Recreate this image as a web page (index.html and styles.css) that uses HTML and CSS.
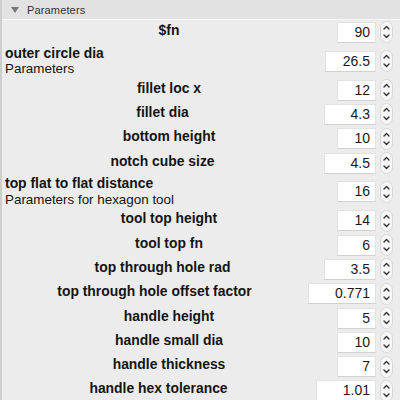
FILE: index.html
```html
<!DOCTYPE html>
<html>
<head>
<meta charset="utf-8">
<link rel="stylesheet" href="styles.css">
</head>
<body>
<div class="panel">
  <div class="header"><span class="tri"></span><span class="title">Parameters</span></div>
  <div class="rows">
    <div class="row"><div class="label">$fn</div><span class="num w39">90</span><svg class="spin" viewBox="0 0 13 22" width="13" height="22"><rect x="0.5" y="0.5" width="12" height="21" rx="6" class="cap"/><path d="M4 8 L6.5 5.5 L9 8" class="chev"/><path d="M4 14 L6.5 16.5 L9 14" class="chev"/></svg></div>
    <div class="row tall"><div class="label left"><span class="name">outer circle dia</span><span class="desc">Parameters</span></div><span class="num w51">26.5</span><svg class="spin" viewBox="0 0 13 22" width="13" height="22"><rect x="0.5" y="0.5" width="12" height="21" rx="6" class="cap"/><path d="M4 8 L6.5 5.5 L9 8" class="chev"/><path d="M4 14 L6.5 16.5 L9 14" class="chev"/></svg></div>
    <div class="row"><div class="label">fillet loc x</div><span class="num w39">12</span><svg class="spin" viewBox="0 0 13 22" width="13" height="22"><rect x="0.5" y="0.5" width="12" height="21" rx="6" class="cap"/><path d="M4 8 L6.5 5.5 L9 8" class="chev"/><path d="M4 14 L6.5 16.5 L9 14" class="chev"/></svg></div>
    <div class="row"><div class="label">fillet dia</div><span class="num w52">4.3</span><svg class="spin" viewBox="0 0 13 22" width="13" height="22"><rect x="0.5" y="0.5" width="12" height="21" rx="6" class="cap"/><path d="M4 8 L6.5 5.5 L9 8" class="chev"/><path d="M4 14 L6.5 16.5 L9 14" class="chev"/></svg></div>
    <div class="row"><div class="label">bottom height</div><span class="num w39">10</span><svg class="spin" viewBox="0 0 13 22" width="13" height="22"><rect x="0.5" y="0.5" width="12" height="21" rx="6" class="cap"/><path d="M4 8 L6.5 5.5 L9 8" class="chev"/><path d="M4 14 L6.5 16.5 L9 14" class="chev"/></svg></div>
    <div class="row"><div class="label">notch cube size</div><span class="num w52">4.5</span><svg class="spin" viewBox="0 0 13 22" width="13" height="22"><rect x="0.5" y="0.5" width="12" height="21" rx="6" class="cap"/><path d="M4 8 L6.5 5.5 L9 8" class="chev"/><path d="M4 14 L6.5 16.5 L9 14" class="chev"/></svg></div>
    <div class="row tall"><div class="label left"><span class="name">top flat to flat distance</span><span class="desc">Parameters for hexagon tool</span></div><span class="num w39">16</span><svg class="spin" viewBox="0 0 13 22" width="13" height="22"><rect x="0.5" y="0.5" width="12" height="21" rx="6" class="cap"/><path d="M4 8 L6.5 5.5 L9 8" class="chev"/><path d="M4 14 L6.5 16.5 L9 14" class="chev"/></svg></div>
    <div class="row"><div class="label">tool top height</div><span class="num w39">14</span><svg class="spin" viewBox="0 0 13 22" width="13" height="22"><rect x="0.5" y="0.5" width="12" height="21" rx="6" class="cap"/><path d="M4 8 L6.5 5.5 L9 8" class="chev"/><path d="M4 14 L6.5 16.5 L9 14" class="chev"/></svg></div>
    <div class="row"><div class="label">tool top fn</div><span class="num w39">6</span><svg class="spin" viewBox="0 0 13 22" width="13" height="22"><rect x="0.5" y="0.5" width="12" height="21" rx="6" class="cap"/><path d="M4 8 L6.5 5.5 L9 8" class="chev"/><path d="M4 14 L6.5 16.5 L9 14" class="chev"/></svg></div>
    <div class="row"><div class="label">top through hole rad</div><span class="num w52">3.5</span><svg class="spin" viewBox="0 0 13 22" width="13" height="22"><rect x="0.5" y="0.5" width="12" height="21" rx="6" class="cap"/><path d="M4 8 L6.5 5.5 L9 8" class="chev"/><path d="M4 14 L6.5 16.5 L9 14" class="chev"/></svg></div>
    <div class="row"><div class="label">top through hole offset factor</div><span class="num w68">0.771</span><svg class="spin" viewBox="0 0 13 22" width="13" height="22"><rect x="0.5" y="0.5" width="12" height="21" rx="6" class="cap"/><path d="M4 8 L6.5 5.5 L9 8" class="chev"/><path d="M4 14 L6.5 16.5 L9 14" class="chev"/></svg></div>
    <div class="row"><div class="label">handle height</div><span class="num w39">5</span><svg class="spin" viewBox="0 0 13 22" width="13" height="22"><rect x="0.5" y="0.5" width="12" height="21" rx="6" class="cap"/><path d="M4 8 L6.5 5.5 L9 8" class="chev"/><path d="M4 14 L6.5 16.5 L9 14" class="chev"/></svg></div>
    <div class="row"><div class="label">handle small dia</div><span class="num w39">10</span><svg class="spin" viewBox="0 0 13 22" width="13" height="22"><rect x="0.5" y="0.5" width="12" height="21" rx="6" class="cap"/><path d="M4 8 L6.5 5.5 L9 8" class="chev"/><path d="M4 14 L6.5 16.5 L9 14" class="chev"/></svg></div>
    <div class="row"><div class="label">handle thickness</div><span class="num w39">7</span><svg class="spin" viewBox="0 0 13 22" width="13" height="22"><rect x="0.5" y="0.5" width="12" height="21" rx="6" class="cap"/><path d="M4 8 L6.5 5.5 L9 8" class="chev"/><path d="M4 14 L6.5 16.5 L9 14" class="chev"/></svg></div>
    <div class="row"><div class="label">handle hex tolerance</div><span class="num w60">1.01</span><svg class="spin" viewBox="0 0 13 22" width="13" height="22"><rect x="0.5" y="0.5" width="12" height="21" rx="6" class="cap"/><path d="M4 8 L6.5 5.5 L9 8" class="chev"/><path d="M4 14 L6.5 16.5 L9 14" class="chev"/></svg></div>
  </div>
</div>
</body>
</html>
```
FILE: styles.css
```css
html, body {
  margin: 0;
  padding: 0;
  background: #ececec;
}
body {
  width: 400px;
  height: 400px;
  overflow: hidden;
  font-family: "Liberation Sans", Arial, sans-serif;
  color: #1c1c1c;
}
.panel {
  height: 400px;
  border-left: 2px solid #cdcdcd;
  box-sizing: border-box;
  background: #ececec;
}
.header {
  height: 19px;
  background: #e2e2e2;
  border-bottom: 1px solid #f7f7f7;
  display: flex;
  align-items: center;
  padding-left: 9px;
  box-sizing: content-box;
}
.tri {
  width: 0;
  height: 0;
  border-left: 4px solid transparent;
  border-right: 4px solid transparent;
  border-top: 6px solid #777;
  margin-top: 1px;
}
.title {
  margin-left: 8px;
  font-size: 11px;
  color: #333;
  letter-spacing: 0.15px;
}
.rows {
  padding-top: 0.25px;
}
.row {
  display: flex;
  align-items: center;
  height: 24.3px;
  padding-left: 3px;
  padding-right: 7px;
}
.row.tall {
  height: 33.5px;
}
.label {
  flex: 1;
  text-align: center;
  font-weight: bold;
  font-size: 13.9px;
  padding-bottom: 5px;
  margin-right: 4px;
  white-space: nowrap;
  color: #141414;
}
.label.left {
  text-align: left;
  padding-bottom: 0;
  display: flex;
  flex-direction: column;
  line-height: 16.5px;
}
.desc {
  font-weight: normal;
  font-size: 13.4px;
}
.num {
  height: 21px;
  box-sizing: border-box;
  background: #fff;
  border: 1px solid #e2e2e2;
  border-bottom-color: #d0d0d0;
  font-size: 14px;
  line-height: 19px;
  text-align: right;
  padding-right: 5px;
  color: #1a1a1a;
}
.w39 { width: 39px; }
.w51 { width: 51px; }
.w52 { width: 52px; }
.w60 { width: 60px; }
.w68 { width: 68px; }
.spin {
  margin-left: 4px;
  display: block;
}
.cap {
  fill: #f7f7f7;
  stroke: #d6d6d6;
  stroke-width: 1;
}
.chev {
  fill: none;
  stroke: #333;
  stroke-width: 1.4;
  stroke-linecap: round;
  stroke-linejoin: round;
}
```
